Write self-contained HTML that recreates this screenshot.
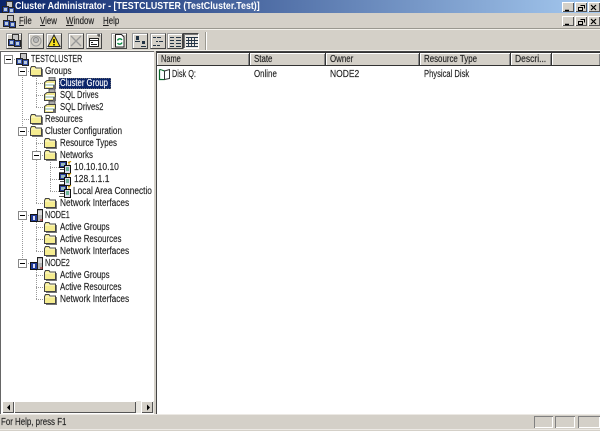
<!DOCTYPE html>
<html><head><meta charset="utf-8"><style>
html,body{margin:0;padding:0;background:#d4d0c8;}
#r{position:relative;width:600px;height:431px;overflow:hidden;background:#d4d0c8;font:10px/12px "Liberation Sans",sans-serif;color:#222;}
#r div,#r svg{position:absolute;}
.t{white-space:nowrap;height:12px;margin-top:1px;transform-origin:0 50%;transform:scaleX(.79);-webkit-text-stroke:.15px currentColor;}
.wb{width:12px;height:10px;background:#d4d0c8;box-shadow:inset 1px 1px #fff,inset -1px -1px #555;}
.tb{width:14px;height:14px;border:1px solid #444;border-top-color:#999;border-left-color:#999;background:#d4d0c8;box-shadow:inset 1px 1px #fff;}
.h{top:53px;height:12px;background:#d4d0c8;border-right:1px solid #333;box-shadow:inset 1px 1px #fff,inset -1px 0 #888;}
.v{width:1px;background:repeating-linear-gradient(to bottom,#999 0 1px,transparent 1px 2px);}
.o{height:1px;background:repeating-linear-gradient(to right,#999 0 1px,transparent 1px 2px);}
.box{width:7px;height:7px;border:1px solid #888;background:#fff;}
.box:after{content:"";position:absolute;left:1px;top:3px;width:5px;height:1px;background:#000;}
.st{top:416px;height:12px;box-shadow:inset 1px 1px #808080,inset -1px -1px #fff;}
</style></head><body><div id="r">
<svg width="0" height="0" style="left:0;top:0"><defs>
<g id="fo"><path d="M0.5 3.500 L1.500 1.500 H5 L6 3 H11.500 V10.500 H0.500Z" fill="#f5ec90" stroke="#444"/><path d="M1 4 H11" stroke="#fffbd0"/><path d="M12.500 4 V11.500 H2" stroke="#777" fill="none"/></g>
<g id="gr"><rect x="5" y="0" width="6" height="5" fill="#aaa" stroke="#444" stroke-width=".8"/><path d="M0.500 5.500 L3 3.500 H11.500 V11.500 H0.500Z" fill="#efe78e" stroke="#444"/><rect x="2" y="6" width="8" height="4" fill="#fff"/><path d="M1 8H11" stroke="#7a9" /><rect x="9" y="8" width="3" height="4" fill="#6a6a6a"/></g>
<g id="ne"><rect x="0.500" y="0.500" width="7" height="6" fill="#2a3f9a" stroke="#111"/><rect x="2" y="2" width="4" height="3" fill="#9bb"/><rect x="5.500" y="4.500" width="6" height="8" fill="#dde" stroke="#111"/><path d="M7 7h3M7 9h3" stroke="#084"/><path d="M1 8.500H5M0 11.500H5" stroke="#555"/><path d="M9 1l1 1 2-2M10 2v2" stroke="#cc9a00"/></g>
<g id="no"><rect x="0.500" y="5.500" width="7" height="7" fill="#1f3a98" stroke="#111"/><rect x="3" y="7" width="2" height="4" fill="#dde"/><rect x="7.500" y="0.500" width="5" height="12" fill="#b5b5b5" stroke="#222"/><path d="M8 3h4M8 5h4" stroke="#fff"/><path d="M10 11h3" stroke="#a22"/></g>
<g id="cl"><rect x="4.500" y="0.500" width="6" height="6" fill="#c5c5c5" stroke="#333"/><rect x="0.500" y="5.500" width="6" height="6" fill="#3450a8" stroke="#222"/><rect x="6.500" y="6.500" width="6" height="6" fill="#3450a8" stroke="#222"/><rect x="2" y="7" width="3" height="3" fill="#bcd"/><rect x="8" y="8" width="3" height="3" fill="#bcd"/></g>
</defs></svg>

<!-- title bar -->
<div style="left:0;top:0;width:600px;height:13px;background:linear-gradient(to right,#0a246a,#a6caf0)"></div>
<svg style="left:2px;top:1px" width="13" height="12"><use href="#cl"/></svg>
<div class="t" style="left:15px;top:0;color:#fff;font-weight:bold;transform:scaleX(.885);-webkit-text-stroke:0">Cluster Administrator - [TESTCLUSTER (TestCluster.Test)]</div>
<div class="wb" style="left:562px;top:2px"></div><div class="wb" style="left:575px;top:2px"></div><div class="wb" style="left:588px;top:2px"></div>
<div class="wb" style="left:562px;top:16px"></div><div class="wb" style="left:575px;top:16px"></div><div class="wb" style="left:588px;top:16px"></div>
<svg style="left:562px;top:2px" width="40" height="26" fill="none" stroke="#000">
<path d="M3 8.500H7M3 22.500H7" stroke-width="1.500"/>
<path d="M16.500 5.500h4v3h-4zM18.500 3.500h4v3M16.500 19.500h4v3h-4zM18.500 17.500h4v3" />
<path d="M29 3l5 5M34 3l-5 5M29 17l5 5M34 17l-5 5" stroke-width="1.200"/></svg>

<!-- menu -->
<svg style="left:3px;top:15px" width="13" height="13"><use href="#cl"/></svg>
<div class="t" style="left:19px;top:15px"><u>F</u>ile</div>
<div class="t" style="left:40px;top:15px"><u>V</u>iew</div>
<div class="t" style="left:66px;top:15px"><u>W</u>indow</div>
<div class="t" style="left:103px;top:15px"><u>H</u>elp</div>
<div style="left:0;top:28px;width:600px;height:1px;background:#9a9890"></div>
<div style="left:0;top:29px;width:600px;height:1px;background:#f2f0ea"></div>

<!-- toolbar -->
<div class="tb" style="left:6px;top:33px"></div>
<svg style="left:8px;top:34px" width="13" height="13"><use href="#cl"/></svg>
<div class="tb" style="left:28px;top:33px"></div>
<svg style="left:30px;top:35px" width="12" height="12"><circle cx="6" cy="6" r="5" fill="#d4d0c8" stroke="#999"/><circle cx="6" cy="5" r="2.500" fill="#bbb" stroke="#888"/></svg>
<div class="tb" style="left:46px;top:33px"></div>
<svg style="left:47px;top:34px" width="14" height="14"><path d="M7 1L13 12.500H1Z" fill="#f8e020" stroke="#222"/><path d="M7 5v4M7 10v1.500" stroke="#000" stroke-width="1.500"/></svg>
<div class="tb" style="left:68px;top:33px"></div>
<svg style="left:70px;top:35px" width="12" height="12"><path d="M1 1L11 11M11 1L1 11" stroke="#999" stroke-width="1.300"/></svg>
<div class="tb" style="left:86px;top:33px"></div>
<svg style="left:88px;top:34px" width="13" height="14"><rect x="1.500" y="4.500" width="9" height="8" fill="#fff" stroke="#222"/><path d="M1 6.500H11M3 8.500H5M3 10.500H9" stroke="#222"/><path d="M9 1h3M11 0v3" stroke="#333"/></svg>
<div class="tb" style="left:111px;top:33px"></div>
<svg style="left:113px;top:34px" width="13" height="14"><path d="M2.500 .5H8.500L11 3V13H2.500Z" fill="#fff" stroke="#222"/><path d="M4.500 6.500A2.500 2.500 0 0 1 9 6M9 8.500A2.500 2.500 0 0 1 4.500 9" fill="none" stroke="#098a40" stroke-width="1.300"/></svg>
<div class="tb" style="left:132px;top:33px"></div>
<svg style="left:134px;top:36px" width="13" height="11"><rect x="2" y="0" width="3" height="4" fill="#234"/><rect x="8" y="5" width="3" height="3" fill="#234"/><path d="M1 5.500H6M7 10.500H12" stroke="#234"/></svg>
<div class="tb" style="left:150px;top:33px"></div>
<svg style="left:152px;top:36px" width="13" height="11" stroke="#234"><path d="M1 1.500H4M5 1.500H9M4 5.500H6M7 5.500H11M1 9.500H4M5 9.500H8"/></svg>
<div class="tb" style="left:167px;top:33px"></div>
<svg style="left:169px;top:36px" width="13" height="11" stroke="#234"><path d="M1 1.500H5M7 1.500H12M1 4.500H5M7 4.500H12M1 7.500H5M7 7.500H12M1 10.500H5M7 10.500H12"/></svg>
<div class="tb" style="left:183px;top:33px;background:#ece9e4;box-shadow:inset 1px 1px #777;border-color:#444 #fff #fff #444"></div>
<svg style="left:186px;top:36px" width="12" height="11" stroke="#234"><path d="M0 1.500H12M0 4.500H12M0 7.500H12M0 10.500H12M2.500 1V11M5.500 1V11M8.500 1V11" stroke-width=".9"/></svg>
<div style="left:205px;top:32px;width:1px;height:18px;background:#9a9890"></div>
<div style="left:206px;top:32px;width:1px;height:18px;background:#fff"></div>
<div style="left:0;top:50px;width:600px;height:1px;background:#f2f0ea"></div>

<!-- tree pane -->
<div style="left:0;top:51px;width:154px;height:363px;background:#fff;box-shadow:inset 1px 1px #666"></div>
<div style="left:154px;top:51px;width:2px;height:363px;background:#d4d0c8"></div>
<div class="v" style="left:22px;top:65px;height:198px"></div>
<div class="v" style="left:36px;top:76px;height:31px"></div>
<div class="v" style="left:36px;top:136px;height:67px"></div>
<div class="v" style="left:50px;top:160px;height:31px"></div>
<div class="v" style="left:36px;top:220px;height:31px"></div>
<div class="v" style="left:36px;top:268px;height:31px"></div>

<div class="o" style="left:12px;top:59px;width:5px"></div>
<div class="o" style="left:26px;top:71px;width:5px"></div>
<div class="o" style="left:36px;top:83px;width:9px"></div>
<div class="o" style="left:36px;top:95px;width:9px"></div>
<div class="o" style="left:36px;top:107px;width:9px"></div>
<div class="o" style="left:22px;top:119px;width:9px"></div>
<div class="o" style="left:26px;top:131px;width:5px"></div>
<div class="o" style="left:36px;top:143px;width:9px"></div>
<div class="o" style="left:40px;top:155px;width:5px"></div>
<div class="o" style="left:50px;top:167px;width:9px"></div>
<div class="o" style="left:50px;top:179px;width:9px"></div>
<div class="o" style="left:50px;top:191px;width:9px"></div>
<div class="o" style="left:36px;top:203px;width:9px"></div>
<div class="o" style="left:26px;top:215px;width:5px"></div>
<div class="o" style="left:36px;top:227px;width:9px"></div>
<div class="o" style="left:36px;top:239px;width:9px"></div>
<div class="o" style="left:36px;top:251px;width:9px"></div>
<div class="o" style="left:26px;top:263px;width:5px"></div>
<div class="o" style="left:36px;top:275px;width:9px"></div>
<div class="o" style="left:36px;top:287px;width:9px"></div>
<div class="o" style="left:36px;top:299px;width:9px"></div>

<div class="box" style="left:4px;top:55px"></div>
<div class="box" style="left:18px;top:67px"></div>
<div class="box" style="left:18px;top:127px"></div>
<div class="box" style="left:32px;top:151px"></div>
<div class="box" style="left:18px;top:211px"></div>
<div class="box" style="left:18px;top:259px"></div>

<svg style="left:16px;top:53px" width="13" height="13"><use href="#cl"/></svg>
<svg style="left:30px;top:65px" width="13" height="12"><use href="#fo"/></svg>
<svg style="left:44px;top:77px" width="13" height="12"><use href="#gr"/></svg>
<svg style="left:44px;top:89px" width="13" height="12"><use href="#gr"/></svg>
<svg style="left:44px;top:101px" width="13" height="12"><use href="#gr"/></svg>
<svg style="left:30px;top:113px" width="13" height="12"><use href="#fo"/></svg>
<svg style="left:30px;top:125px" width="13" height="12"><use href="#fo"/></svg>
<svg style="left:44px;top:137px" width="13" height="12"><use href="#fo"/></svg>
<svg style="left:44px;top:149px" width="13" height="12"><use href="#fo"/></svg>
<svg style="left:59px;top:161px" width="13" height="13"><use href="#ne"/></svg>
<svg style="left:59px;top:173px" width="13" height="13"><use href="#ne"/></svg>
<svg style="left:59px;top:185px" width="13" height="13"><use href="#ne"/></svg>
<svg style="left:44px;top:197px" width="13" height="12"><use href="#fo"/></svg>
<svg style="left:30px;top:209px" width="13" height="13"><use href="#no"/></svg>
<svg style="left:44px;top:221px" width="13" height="12"><use href="#fo"/></svg>
<svg style="left:44px;top:233px" width="13" height="12"><use href="#fo"/></svg>
<svg style="left:44px;top:245px" width="13" height="12"><use href="#fo"/></svg>
<svg style="left:30px;top:257px" width="13" height="13"><use href="#no"/></svg>
<svg style="left:44px;top:269px" width="13" height="12"><use href="#fo"/></svg>
<svg style="left:44px;top:281px" width="13" height="12"><use href="#fo"/></svg>
<svg style="left:44px;top:293px" width="13" height="12"><use href="#fo"/></svg>

<div class="t" style="left:31px;top:53px;transform:scaleX(.71)">TESTCLUSTER</div>
<div class="t" style="left:45px;top:65px;transform:scaleX(.81)">Groups</div>
<div style="left:59px;top:78px;width:52px;height:11px;background:#0a246a;outline:1px dotted rgba(200,176,112,.45);outline-offset:-1px"></div>
<div class="t" style="left:60px;top:77px;color:#fff;transform:scaleX(.77)">Cluster Group</div>
<div class="t" style="left:60px;top:89px;transform:scaleX(.76)">SQL Drives</div>
<div class="t" style="left:60px;top:101px;transform:scaleX(.77)">SQL Drives2</div>
<div class="t" style="left:45px;top:113px">Resources</div>
<div class="t" style="left:45px;top:125px;transform:scaleX(.82)">Cluster Configuration</div>
<div class="t" style="left:60px;top:137px">Resource Types</div>
<div class="t" style="left:60px;top:149px">Networks</div>
<div class="t" style="left:74px;top:161px;transform:scaleX(.85)">10.10.10.10</div>
<div class="t" style="left:74px;top:173px;transform:scaleX(.85)">128.1.1.1</div>
<div class="t" style="left:73px;top:185px;width:95px;overflow:hidden;transform:scaleX(.83)">Local Area Connection</div>
<div class="t" style="left:60px;top:197px;transform:scaleX(.83)">Network Interfaces</div>
<div class="t" style="left:45px;top:209px;transform:scaleX(.72)">NODE1</div>
<div class="t" style="left:60px;top:221px">Active Groups</div>
<div class="t" style="left:60px;top:233px">Active Resources</div>
<div class="t" style="left:60px;top:245px;transform:scaleX(.83)">Network Interfaces</div>
<div class="t" style="left:45px;top:257px;transform:scaleX(.72)">NODE2</div>
<div class="t" style="left:60px;top:269px">Active Groups</div>
<div class="t" style="left:60px;top:281px">Active Resources</div>
<div class="t" style="left:60px;top:293px;transform:scaleX(.83)">Network Interfaces</div>

<!-- scrollbar -->
<div style="left:2px;top:401px;width:152px;height:12px;background:#e8e6e0"></div>
<div class="wb" style="left:2px;top:401px;height:12px"></div>
<div class="wb" style="left:14px;top:401px;width:122px;height:12px"></div>
<div class="wb" style="left:141px;top:401px;height:12px"></div>
<svg style="left:2px;top:401px" width="152" height="12"><path d="M5 6.500L8 3.500V9.500ZM145 3.500L148 6.500L145 9.500Z" fill="#000"/></svg>

<!-- list pane -->
<div style="left:156px;top:51px;width:444px;height:363px;background:#fff;box-shadow:inset 1px 1px #444"></div>
<div style="left:157px;top:52px;width:443px;height:1px;background:#333"></div>
<div class="h" style="left:157px;width:92px"></div>
<div class="h" style="left:250px;width:75px"></div>
<div class="h" style="left:326px;width:93px"></div>
<div class="h" style="left:420px;width:90px"></div>
<div class="h" style="left:511px;width:40px"></div>
<div class="h" style="left:552px;width:48px;border-right:0"></div>
<div style="left:157px;top:65px;width:443px;height:1px;background:#333"></div>
<div class="t" style="left:161px;top:53px;transform:scaleX(.74)">Name</div>
<div class="t" style="left:254px;top:53px">State</div>
<div class="t" style="left:330px;top:53px">Owner</div>
<div class="t" style="left:424px;top:53px">Resource Type</div>
<div class="t" style="left:515px;top:53px;transform:scaleX(.85)">Descri...</div>
<svg style="left:158px;top:68px" width="14" height="13"><path d="M1.500 1.500V11.500H6.500M1.500 1.500L6.500 3V11.500" fill="none" stroke="#0a6a2a" stroke-width="1.200"/><path d="M6.500 3L11.500 1.500V10.500L6.500 11.500Z" fill="#fff" stroke="#333"/><path d="M2.500 2V10.500L6 11V3.500Z" fill="#fff"/></svg>
<div class="t" style="left:172px;top:68px;transform:scaleX(.73)">Disk Q:</div>
<div class="t" style="left:254px;top:68px">Online</div>
<div class="t" style="left:330px;top:68px;transform:scaleX(.85)">NODE2</div>
<div class="t" style="left:424px;top:68px;transform:scaleX(.76)">Physical Disk</div>

<!-- status bar -->
<div style="left:0;top:414px;width:600px;height:1px;background:#ece9e4"></div>
<div class="t" style="left:1px;top:416px">For Help, press F1</div>
<div class="st" style="left:534px;width:19px"></div>
<div class="st" style="left:555px;width:20px"></div>
<div class="st" style="left:578px;width:22px"></div>
<div style="left:0;top:429px;width:600px;height:1px;background:#ece9e4"></div>
</div></body></html>
